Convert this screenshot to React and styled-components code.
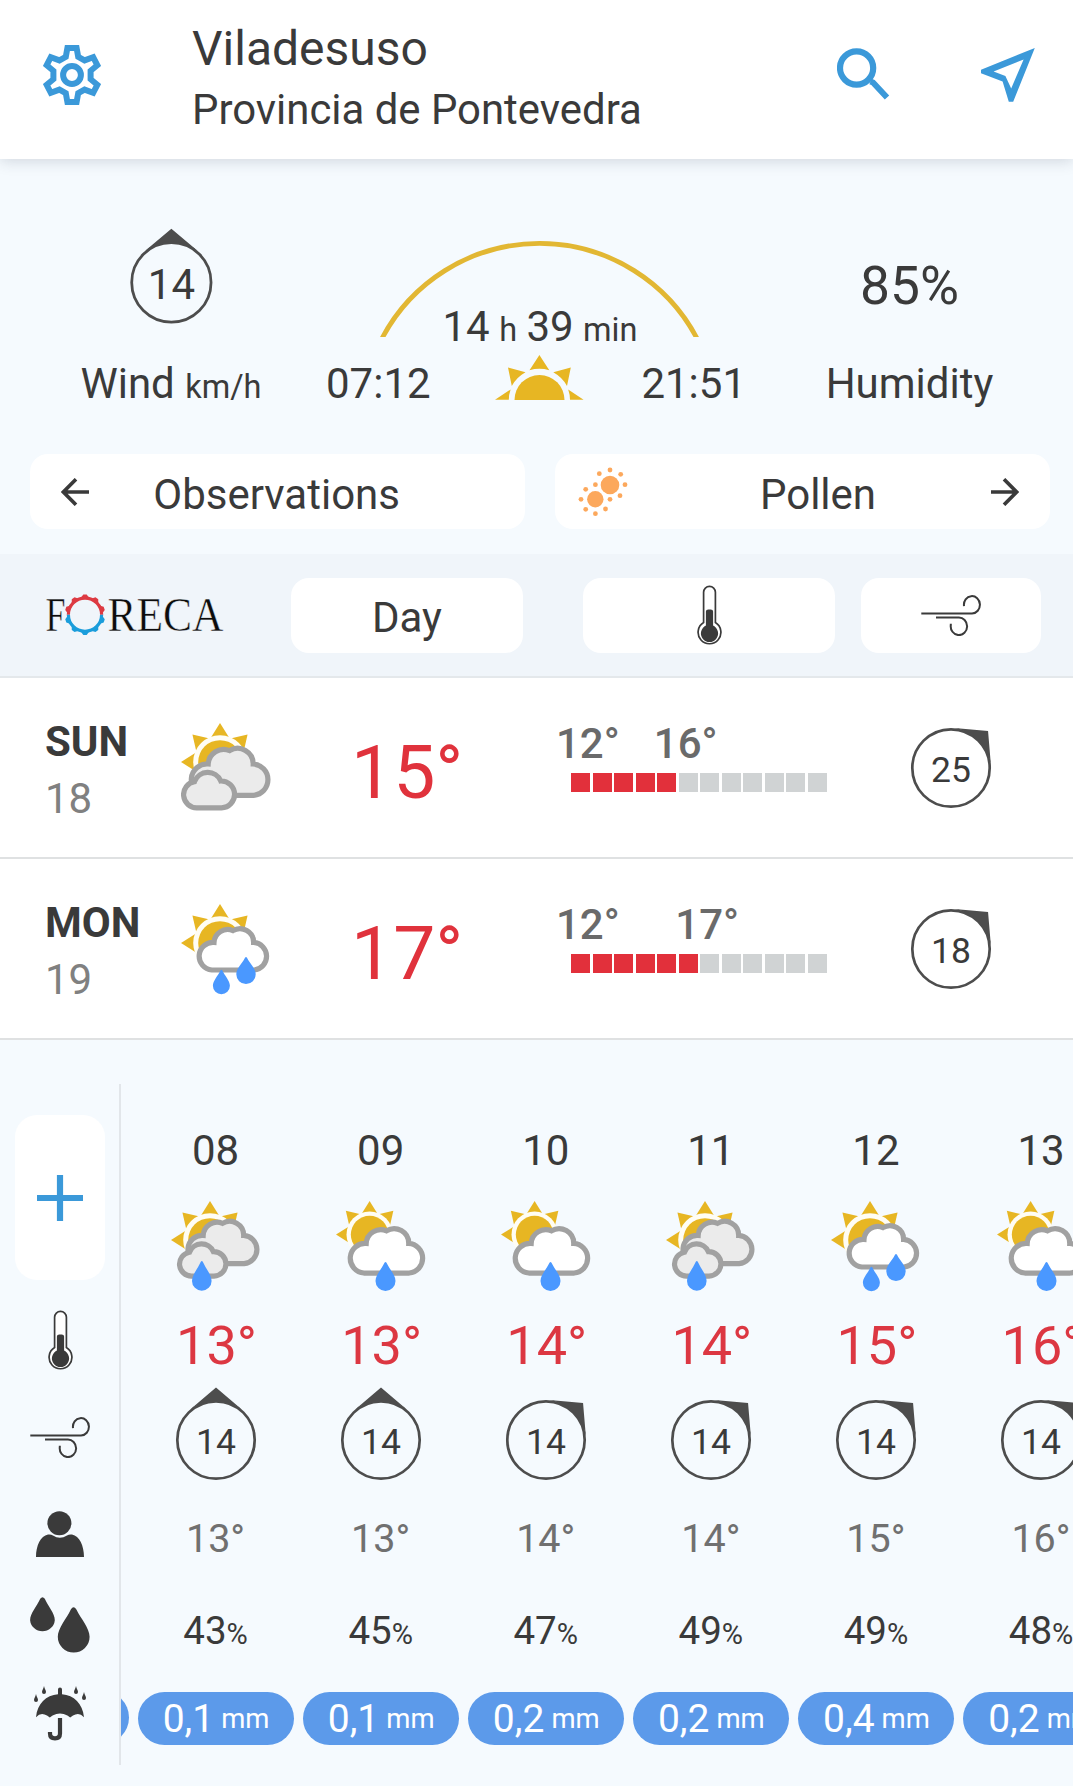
import React from "react";
import styled, { createGlobalStyle } from "styled-components";

const days = [
  { name: "SUN", date: "18", icon: "cloudy", temp: 15, low: 12, high: 16, filled: 5, wind: 25 },
  { name: "MON", date: "19", icon: "rain", temp: 17, low: 12, high: 17, filled: 6, wind: 18 },
];

const hours = [
  { hour: "08", icon: "cloudyShower", temp: 13, wind: 14, dir: 0, feels: 13, humidity: 43, rain: "0,1" },
  { hour: "09", icon: "shower", temp: 13, wind: 14, dir: 0, feels: 13, humidity: 45, rain: "0,1" },
  { hour: "10", icon: "shower", temp: 14, wind: 14, dir: 45, feels: 14, humidity: 47, rain: "0,2" },
  { hour: "11", icon: "cloudyShower", temp: 14, wind: 14, dir: 45, feels: 14, humidity: 49, rain: "0,2" },
  { hour: "12", icon: "rain", temp: 15, wind: 14, dir: 45, feels: 15, humidity: 49, rain: "0,4" },
  { hour: "13", icon: "shower", temp: 16, wind: 14, dir: 45, feels: 16, humidity: 48, rain: "0,2" },
];

const GearIcon = () => (
  <svg width="58" height="60" viewBox="-29 -30 58 60" fill="none" stroke="#3b99d9" strokeWidth="6">
    <path d="M-4.6 -27H4.6L6.2 -18.2L12.6 -14.6L21.2 -17.8L25.3 -9.8L18.6 -4.2V4.2L25.3 9.8L21.2 17.8L12.6 14.6L6.2 18.2L4.6 27H-4.6L-6.2 18.2L-12.6 14.6L-21.2 17.8L-25.3 9.8L-18.6 4.2V-4.2L-25.3 -9.8L-21.2 -17.8L-12.6 -14.6L-6.2 -18.2Z" />
    <circle r="8.9" />
  </svg>
);

const SearchIcon = () => (
  <svg width="53" height="54" viewBox="0 0 53 54" fill="none" stroke="#3b99d9" strokeWidth="6.2">
    <circle cx="19.6" cy="20" r="16.6" />
    <path d="M33.5 33.5L36 34.5L50 49.5" strokeWidth="6" />
  </svg>
);

const LocateIcon = () => (
  <svg width="54" height="54" viewBox="0 0 54 54" fill="#3b99d9" fillRule="evenodd">
    <path d="M53.8 0L32.2 53.8H27.8L21.6 33.6L0 25.2V21.8ZM42.6 11.4L12.6 23.6L24.4 28L30.2 40.4Z" />
  </svg>
);

const ArrowIcon = ({ back }) => (
  <svg width="28" height="28" viewBox="0 0 28 28" fill="none" stroke="#3a3a3a" strokeWidth="3.6">
    {back ? <path d="M28 14H2.5M15 1.2L2.4 14L15 26.8" /> : <path d="M0 14H25.5M13 1.2L25.6 14L13 26.8" />}
  </svg>
);

const PollenIcon = () => (
  <svg width="50" height="50" viewBox="578 468 50 50" fill="#fca85c">
    <circle cx="610" cy="486" r="9.3" />
    <circle cx="595.3" cy="500.3" r="8.2" />
    {[
      [599.3, 474.7], [610, 471], [620.7, 475.3], [625, 485.7], [620, 496.7], [610, 500.3],
      [605.5, 510], [595.4, 514.7], [585.7, 510.3], [581, 500.3], [585.7, 490.3], [595.4, 485.7],
    ].map(([x, y]) => (
      <circle key={`${x}-${y}`} cx={x} cy={y} r="2.4" />
    ))}
  </svg>
);

const ThermoIcon = () => (
  <svg width="25" height="61" viewBox="0 0 25 61">
    <path
      d="M6.6 37.6V7.2A5.9 5.9 0 0 1 18.4 7.2V37.6A11.4 11.4 0 1 1 6.6 37.6Z"
      fill="#fff"
      stroke="#3a3a3a"
      strokeWidth="1.7"
    />
    <path d="M8.9 40.6V27A2.4 2.4 0 0 1 11.3 24.4H13.7A2.4 2.4 0 0 1 16.1 27V40.6A8.6 8.6 0 1 1 8.9 40.6Z" fill="#3a3a3a" />
  </svg>
);

const WindIcon = () => (
  <svg width="60" height="41" viewBox="0 0 60 41" fill="none" stroke="#3a3a3a" strokeWidth="2">
    <path d="M0.3 18.5H51A8 8.7 0 1 0 43 11V10.4M15 22.5H37.5A8.2 8.8 0 1 1 29.8 30V28.8" />
  </svg>
);

const PersonIcon = () => (
  <svg width="48" height="46" viewBox="0 0 48 46" fill="#3a3a3a">
    <circle cx="23.4" cy="12.3" r="12" />
    <path d="M0 46C0 35 4.5 25 12 23.6Q15 23.2 17 24.6Q23.8 29 31 24.6Q33 23.2 36 23.6C43.5 25 48 35 48 46Z" />
  </svg>
);

const DropsIcon = () => (
  <svg width="60" height="56" viewBox="0 0 60 56" fill="#3a3a3a">
    <path d="M10.2 1.8Q12.5 -1.5 14.8 1.8C18 9 24.8 16.5 24.8 23.2A12.4 12.2 0 0 1 0.1 23.2C0.1 16.5 7 9 10.2 1.8Z" />
    <path d="M40.8 12.4Q43.6 8.3 46.4 12.4C50.8 21.5 59.6 31 59.6 39.8A15.9 15.8 0 0 1 27.8 39.8C27.8 31 36.6 21.5 40.8 12.4Z" />
  </svg>
);

const UmbrellaIcon = () => (
  <svg width="52" height="55" viewBox="0 0 52 55" fill="#3a3a3a">
    <path d="M24 3.5Q24 1.6 26 1.6T28 3.5V8.2C40 9 48.6 17.5 50 31.2Q45 25.5 39 29.6L36.2 31.4L33.4 29.6Q26 25.5 18.6 29.6L15.8 31.4L13 29.6Q7 25.5 2 31.2C3.4 17.5 12 9 24 8.2Z" />
    <path d="M26 32V47.5Q26 52.4 21 52.4T16 47.5V46" fill="none" stroke="#3a3a3a" strokeWidth="4.2" />
    {[[2, 8], [10, 0], [42, 0], [50, 6]].map(([x, y]) => (
      <path key={x} d={`M${x} ${y}C${x + 0.6} ${y + 3} ${x + 2} ${y + 4} ${x + 2} ${y + 6}A2 2 0 0 1 ${x - 2} ${y + 6}C${x - 2} ${y + 4} ${x - 0.6} ${y + 3} ${x} ${y}Z`} />
    ))}
  </svg>
);

const PlusIcon = () => (
  <svg width="46" height="46" viewBox="0 0 46 46" stroke="#3b99d9" strokeWidth="6.2">
    <path d="M23 0V46M0 23H46" />
  </svg>
);

const SunriseIcon = () => (
  <svg width="89" height="45" viewBox="0 0 89 45" fill="#e7b623">
    <path d="M19.5 45A25 25 0 0 1 69.5 45Z" />
    <path d="M44.4 0L54.3 15.2Q44.4 12.4 34.5 15.2ZM13 12.4L30.5 17.2Q21 22.6 16.8 31ZM75.8 12.4L58.3 17.2Q67.8 22.6 72 31ZM0 44.8L15.6 34.4Q13.8 39.4 13.8 44.8ZM88.6 44.8L73.2 34.4Q75 39.4 75 44.8Z" />
  </svg>
);

const DayArc = () => (
  <svg width="320" height="97" viewBox="0 0 320 97" fill="none" stroke="#e2b733" strokeWidth="4.8">
    <path d="M-0.8 104A178 178 0 0 1 319.8 104" />
  </svg>
);

const ForecaLogo = () => (
  <Logo width="180" height="60" viewBox="0 -8 180 60">
    <g fill="#0c0c0c" fontFamily="'Liberation Serif', serif" fontSize="49.5" stroke="#f0f5fa" strokeWidth="0.5">
      <text x="0.5" y="37.6" textLength="20" lengthAdjust="spacingAndGlyphs">F</text>
      <text x="62.5" y="37.6" textLength="116" lengthAdjust="spacingAndGlyphs">RECA</text>
    </g>
    <g transform="translate(40 21.7)">
      {[0, 1, 2, 3, 4, 5, 6, 7, 8, 9].map((n) => (
        <path
          key={n}
          d="M-4.4 -16.5L-1.7 -20.2H1.7L4.4 -16.5Z"
          fill={n < 3 || n > 7 ? "#dd3a42" : "#1a9ddb"}
          transform={`rotate(${n * 36})`}
        />
      ))}
      <path d="M-16.6 0A16.6 16.6 0 0 1 16.6 0" fill="none" stroke="#dd3a42" strokeWidth="3.2" />
      <path d="M-16.6 0A16.6 16.6 0 0 0 16.6 0" fill="none" stroke="#1a9ddb" strokeWidth="3.2" />
    </g>
  </Logo>
);

const WindBadge = ({ value, dir = 45, scale = 1, fontSize = 35.5 }) => (
  <Badge width={110 * scale} height={110 * scale} viewBox="-55 -55 110 110">
    <g transform={`rotate(${dir})`} fill="#4d4d4d">
      <path d="M0 -52.4L-25.8 -30.6A45 45 0 0 1 25.8 -30.6Z" />
      <circle r="38.7" fill="none" stroke="#4d4d4d" strokeWidth="2.7" />
    </g>
    <text y={fontSize * 0.4} textAnchor="middle" fontSize={fontSize} fill="#3a3a3a">
      {value}
    </text>
  </Badge>
);

const CLOUD = "M24 72.3A15.7 15.7 0 0 1 26.5 41A15.5 15.5 0 0 1 48 27.6A15.5 15.5 0 0 1 71.5 41A15.7 15.7 0 0 1 72 72.3Z";
const SMALL_CLOUD = "M16.5 84.8A13.2 13.2 0 0 1 14 58.6A14.2 14.2 0 0 1 40.3 58A13.4 13.4 0 0 1 41 84.8Z";

const Sun = ({ r = 39 }) => (
  <g transform={`translate(${r} ${r}) scale(${r / 39})`}>
    {[-90, -45, 0, 45].map((a) => (
      <path key={a} d="M0 -39L-9.4 -24H9.4Z" fill="#e7b623" transform={`rotate(${a})`} />
    ))}
    <circle r="26.8" fill="#fffdf4" />
    <circle r="21.8" fill="#e7b623" />
  </g>
);

// Maps the base cloud outline to a box that starts at x, y
const Cloud = ({ d = CLOUD, ox = 8.3, oy = 25.5, x = ox, y = oy, scale = 1, fill = "#fff" }) => (
  <path
    d={d}
    fill={fill}
    stroke="#a1a1a1"
    strokeWidth={5.2 / scale}
    transform={`translate(${x} ${y}) scale(${scale}) translate(${-ox} ${-oy})`}
  />
);

const Drop = ({ x, y, w, h }) => {
  const r = w / 2;
  const cy = y + h - r;
  return (
    <path
      d={`M${x - 1} ${y + 0.8}Q${x} ${y - 0.6} ${x + 1} ${y + 0.8}C${x + r * 0.4} ${y + h * 0.25} ${x + r} ${cy - r * 0.6} ${x + r} ${cy}A${r} ${r} 0 0 1 ${x - r} ${cy}C${x - r} ${cy - r * 0.6} ${x - r * 0.4} ${y + h * 0.25} ${x - 1} ${y + 0.8}Z`}
      fill="#4a98ff"
    />
  );
};

const weather = {
  cloudy: (
    <>
      <Sun />
      <Cloud x={9} fill="#ebebeb" />
      <Cloud d={SMALL_CLOUD} ox={2.5} oy={49.8} x={2} fill="#ebebeb" />
    </>
  ),
  cloudyShower: (
    <>
      <Sun />
      <Cloud x={15.8} y={20.5} scale={0.9} fill="#ebebeb" />
      <Cloud d={SMALL_CLOUD} ox={2.5} oy={49.8} x={8} y={43.2} scale={0.91} fill="#ebebeb" />
      <Drop x={30.8} y={60} w={19.6} h={29.7} />
    </>
  ),
  shower: (
    <>
      <Sun r={33.6} />
      <Cloud x={13} y={27.8} scale={0.945} />
      <Drop x={49.5} y={61} w={20} h={29} />
    </>
  ),
  rain: (
    <>
      <Sun />
      <Cloud x={17} y={24.8} scale={0.88} />
      <Drop x={40.4} y={65.7} w={17} h={24.6} />
      <Drop x={65} y={53} w={19.4} h={27} />
    </>
  ),
};

const WeatherIcon = ({ type }) => (
  <svg width="91" height="91" viewBox="0 0 91 91">
    {weather[type]}
  </svg>
);

const App = () => (
  <>
    <GlobalStyle />
    <Page>
      <Header>
        <GearIcon />
        <Place>
          <PlaceName>Viladesuso</PlaceName>
          <Region>Provincia de Pontevedra</Region>
        </Place>
        <SearchIcon />
        <LocateIcon />
      </Header>

      <Summary>
        <WindColumn>
          <StatTop $pad={67}>
            <WindBadge value={14} dir={0} scale={1.025} fontSize={41} />
          </StatTop>
          <Label>
            Wind <small>km/h</small>
          </Label>
        </WindColumn>
        <div>
          <DayLight>
            <DayArc />
            <DayLength>
              14 <small>h</small> 39 <small>min</small>
            </DayLength>
          </DayLight>
          <Times>
            <span>07:12</span>
            <SunriseIcon />
            <span>21:51</span>
          </Times>
        </div>
        <div>
          <StatTop $pad={97}>
            <Humidity>85%</Humidity>
          </StatTop>
          <Label>Humidity</Label>
        </div>
      </Summary>

      <Links>
        <LinkButton $pad="0 125px 0 31px">
          <ArrowIcon back />
          <span>Observations</span>
        </LinkButton>
        <LinkButton $pad="0 31px 0 23px">
          <PollenIcon />
          <PollenLabel>Pollen</PollenLabel>
          <ArrowIcon />
        </LinkButton>
      </Links>

      <FilterBar>
        <ForecaLogo />
        <FilterButton $width={232} $left={66}>
          <FilterLabel>Day</FilterLabel>
        </FilterButton>
        <FilterButton $width={252} $left={60}>
          <ThermoIcon />
        </FilterButton>
        <FilterButton $width={180} $left={26}>
          <WindIcon />
        </FilterButton>
      </FilterBar>

      {days.map((day) => (
        <DayRow key={day.name}>
          <div>
            <DayName>{day.name}</DayName>
            <DayDate>{day.date}</DayDate>
          </div>
          <DayIcon>
            <WeatherIcon type={day.icon} />
          </DayIcon>
          <DayTemp>{day.temp}°</DayTemp>
          <div>
            <Range $gap={34 + (day.filled - 5) * 21.5}>
              <span>{day.low}°</span>
              <span>{day.high}°</span>
            </Range>
            <Bars>
              {Array.from({ length: 12 }, (_, i) => (
                <Bar key={i} $on={i < day.filled} />
              ))}
            </Bars>
          </div>
          <WindBadge value={day.wind} />
        </DayRow>
      ))}

      <Hourly>
        <Rail>
          <AddButton>
            <PlusIcon />
          </AddButton>
          <RailIcon $height={90}>
            <ThermoIcon />
          </RailIcon>
          <RailIcon $height={105}>
            <WindIcon />
          </RailIcon>
          <RailIcon $height={88}>
            <PersonIcon />
          </RailIcon>
          <RailIcon $height={93}>
            <DropsIcon />
          </RailIcon>
          <RailIcon $height={84}>
            <UmbrellaIcon />
          </RailIcon>
        </Rail>
        <Hours>
          <PreviousHour>
            <Pill />
          </PreviousHour>
          {hours.map((h) => (
            <HourColumn key={h.hour}>
              <HourLabel>{h.hour}</HourLabel>
              <HourIcon>
                <WeatherIcon type={h.icon} />
              </HourIcon>
              <HourTemp>{h.temp}°</HourTemp>
              <WindBadge value={h.wind} dir={h.dir} />
              <Feels>{h.feels}°</Feels>
              <HourHumidity>
                {h.humidity}
                <small>%</small>
              </HourHumidity>
              <Pill>
                {h.rain} <small>mm</small>
              </Pill>
            </HourColumn>
          ))}
        </Hours>
      </Hourly>
    </Page>
  </>
);

const GlobalStyle = createGlobalStyle`
  body {
    margin: 0;
    background: #f5fafe;
  }

  svg {
    display: block;
    flex: none;
  }
`;

const Page = styled.div`
  width: 1073px;
  height: 1786px;
  overflow: hidden;
  box-sizing: border-box;
  font-family: Roboto, "Liberation Sans", sans-serif;
  font-size: 42px;
  line-height: 50px;
  color: #3a3a3a;
  background: #f5fafe;
`;

const Header = styled.header`
  position: relative;
  display: flex;
  align-items: center;
  box-sizing: border-box;
  height: 159px;
  padding: 0 38px 10px 43px;
  background: #fff;
  box-shadow: 0 2px 14px rgba(40, 50, 70, 0.18);

  > svg:nth-last-child(2) {
    margin-right: 91px;
  }
`;

const Place = styled.div`
  flex: 1;
  padding: 6px 0 0 91px;
`;

const PlaceName = styled.div`
  font-size: 48px;
  line-height: 56px;
`;

const Region = styled.div`
  margin-top: 9px;
  font-size: 41.9px;
  line-height: 48px;
`;

const Summary = styled.section`
  display: grid;
  grid-template-columns: 326px 420px 327px;
  height: 295px;
`;

const WindColumn = styled.div`
  padding-left: 16px;
`;

const StatTop = styled.div`
  display: flex;
  justify-content: center;
  box-sizing: border-box;
  height: 200px;
  padding-top: ${(p) => p.$pad}px;
`;

const Label = styled.div`
  text-align: center;

  small {
    font-size: 32.5px;
  }
`;

const Humidity = styled.div`
  font-size: 53.3px;
  line-height: 60px;
`;

const DayLight = styled.div`
  display: grid;
  justify-items: center;
  height: 200px;
  padding-left: 7px;

  > * {
    grid-area: 1 / 1;
  }

  svg {
    margin-top: 81px;
  }
`;

const DayLength = styled.div`
  align-self: end;
  padding: 0 0 4px 1px;
  word-spacing: -1px;

  small {
    font-size: 32.5px;
  }
`;

const Times = styled.div`
  display: flex;
  justify-content: space-between;

  svg {
    margin: -4px 0 0 7px;
  }
`;

const Links = styled.nav`
  display: flex;
  gap: 30px;
  height: 100px;
  padding: 0 23px 0 30px;
`;

const LinkButton = styled.div`
  display: flex;
  flex: none;
  align-items: center;
  justify-content: space-between;
  box-sizing: border-box;
  width: 495px;
  height: 75px;
  padding: ${(p) => p.$pad};
  border-radius: 18px;
  background: #fff;

  span {
    padding-top: 7px;
  }
`;

const PollenLabel = styled.span`
  padding-left: 17px;
`;

const FilterBar = styled.section`
  display: flex;
  align-items: center;
  box-sizing: border-box;
  height: 124px;
  padding-left: 45px;
  border-bottom: 2px solid #e4e8eb;
  background: #f0f5fa;
`;

const FilterButton = styled.div`
  display: flex;
  align-items: center;
  justify-content: center;
  box-sizing: border-box;
  width: ${(p) => p.$width}px;
  height: 75px;
  margin-left: ${(p) => p.$left}px;
  border-radius: 18px;
  background: #fff;
`;

const FilterLabel = styled.span`
  padding-top: 5px;
`;

const Logo = styled.svg`
  overflow: visible;
`;

const DayRow = styled.div`
  display: grid;
  grid-template-columns: 136px 169px 205px 341px 110px;
  box-sizing: border-box;
  height: 181px;
  padding: 35px 0 0 45px;
  border-bottom: 2px solid #dfe1e2;
  background: #fff;
`;

const DayName = styled.div`
  margin-top: 4px;
  font-weight: 700;
`;

const DayDate = styled.div`
  margin-top: 7px;
  color: #808080;
`;

const DayIcon = styled.div`
  padding-top: 10px;
`;

const DayTemp = styled.div`
  margin: 19px 0 0 1px;
  font-size: 75px;
  line-height: 80px;
  color: #e0323c;
`;

const Range = styled.div`
  display: flex;
  gap: ${(p) => p.$gap}px;
  margin: 6px 0 0 1px;
  font-weight: 500;
  color: #6a6a6a;
`;

const Bars = styled.div`
  display: flex;
  gap: 2.6px;
  width: 256px;
  margin: 4px 0 0 16px;
`;

const Bar = styled.div`
  flex: 1;
  height: 18.5px;
  background: ${(p) => (p.$on ? "#e2303b" : "#d0d3d4")};
`;

const Badge = styled.svg`
  overflow: visible;
`;

const Hourly = styled.section`
  display: flex;
  height: 681px;
  padding-top: 44px;
`;

const Rail = styled.div`
  display: flex;
  flex: none;
  flex-direction: column;
  align-items: center;
  width: 119px;
  border-right: 2px solid #e2e6ea;
`;

const AddButton = styled.div`
  display: flex;
  align-items: center;
  justify-content: center;
  width: 90px;
  height: 165px;
  margin: 31px 0 15px 1px;
  border-radius: 22px;
  background: #fff;
`;

const RailIcon = styled.div`
  display: flex;
  align-items: center;
  height: ${(p) => p.$height}px;
  padding-left: 1px;
`;

const Hours = styled.div`
  display: flex;
  flex: 1;
  overflow: hidden;
`;

const PreviousHour = styled.div`
  display: flex;
  flex: none;
  justify-content: flex-end;
  box-sizing: border-box;
  width: 12px;
  padding: 607px 4px 0 0;
`;

const HourColumn = styled.div`
  display: flex;
  flex: none;
  flex-direction: column;
  align-items: center;
  width: 165.1px;
`;

const HourLabel = styled.div`
  margin: 42px 0 25px;
`;

const HourIcon = styled.div`
  padding-left: 2px;
`;

const HourTemp = styled.div`
  margin: 24px 0 9px;
  padding-left: 2px;
  font-size: 54px;
  line-height: 60px;
  color: #dc3742;
`;

const Feels = styled.div`
  margin-top: 20px;
  font-size: 39.5px;
  line-height: 48px;
  color: #707070;
`;

const HourHumidity = styled.div`
  margin: 45px 0 35px;
  font-size: 38.5px;
  line-height: 46px;

  small {
    font-size: 29px;
  }
`;

const Pill = styled.div`
  display: flex;
  flex: none;
  align-items: center;
  justify-content: center;
  gap: 7px;
  box-sizing: border-box;
  width: 156px;
  height: 53px;
  padding: 1px 0 0 1px;
  border-radius: 27px;
  font-size: 39px;
  color: #fff;
  background: #5c9aea;

  small {
    font-size: 27.5px;
  }
`;

export default App;
